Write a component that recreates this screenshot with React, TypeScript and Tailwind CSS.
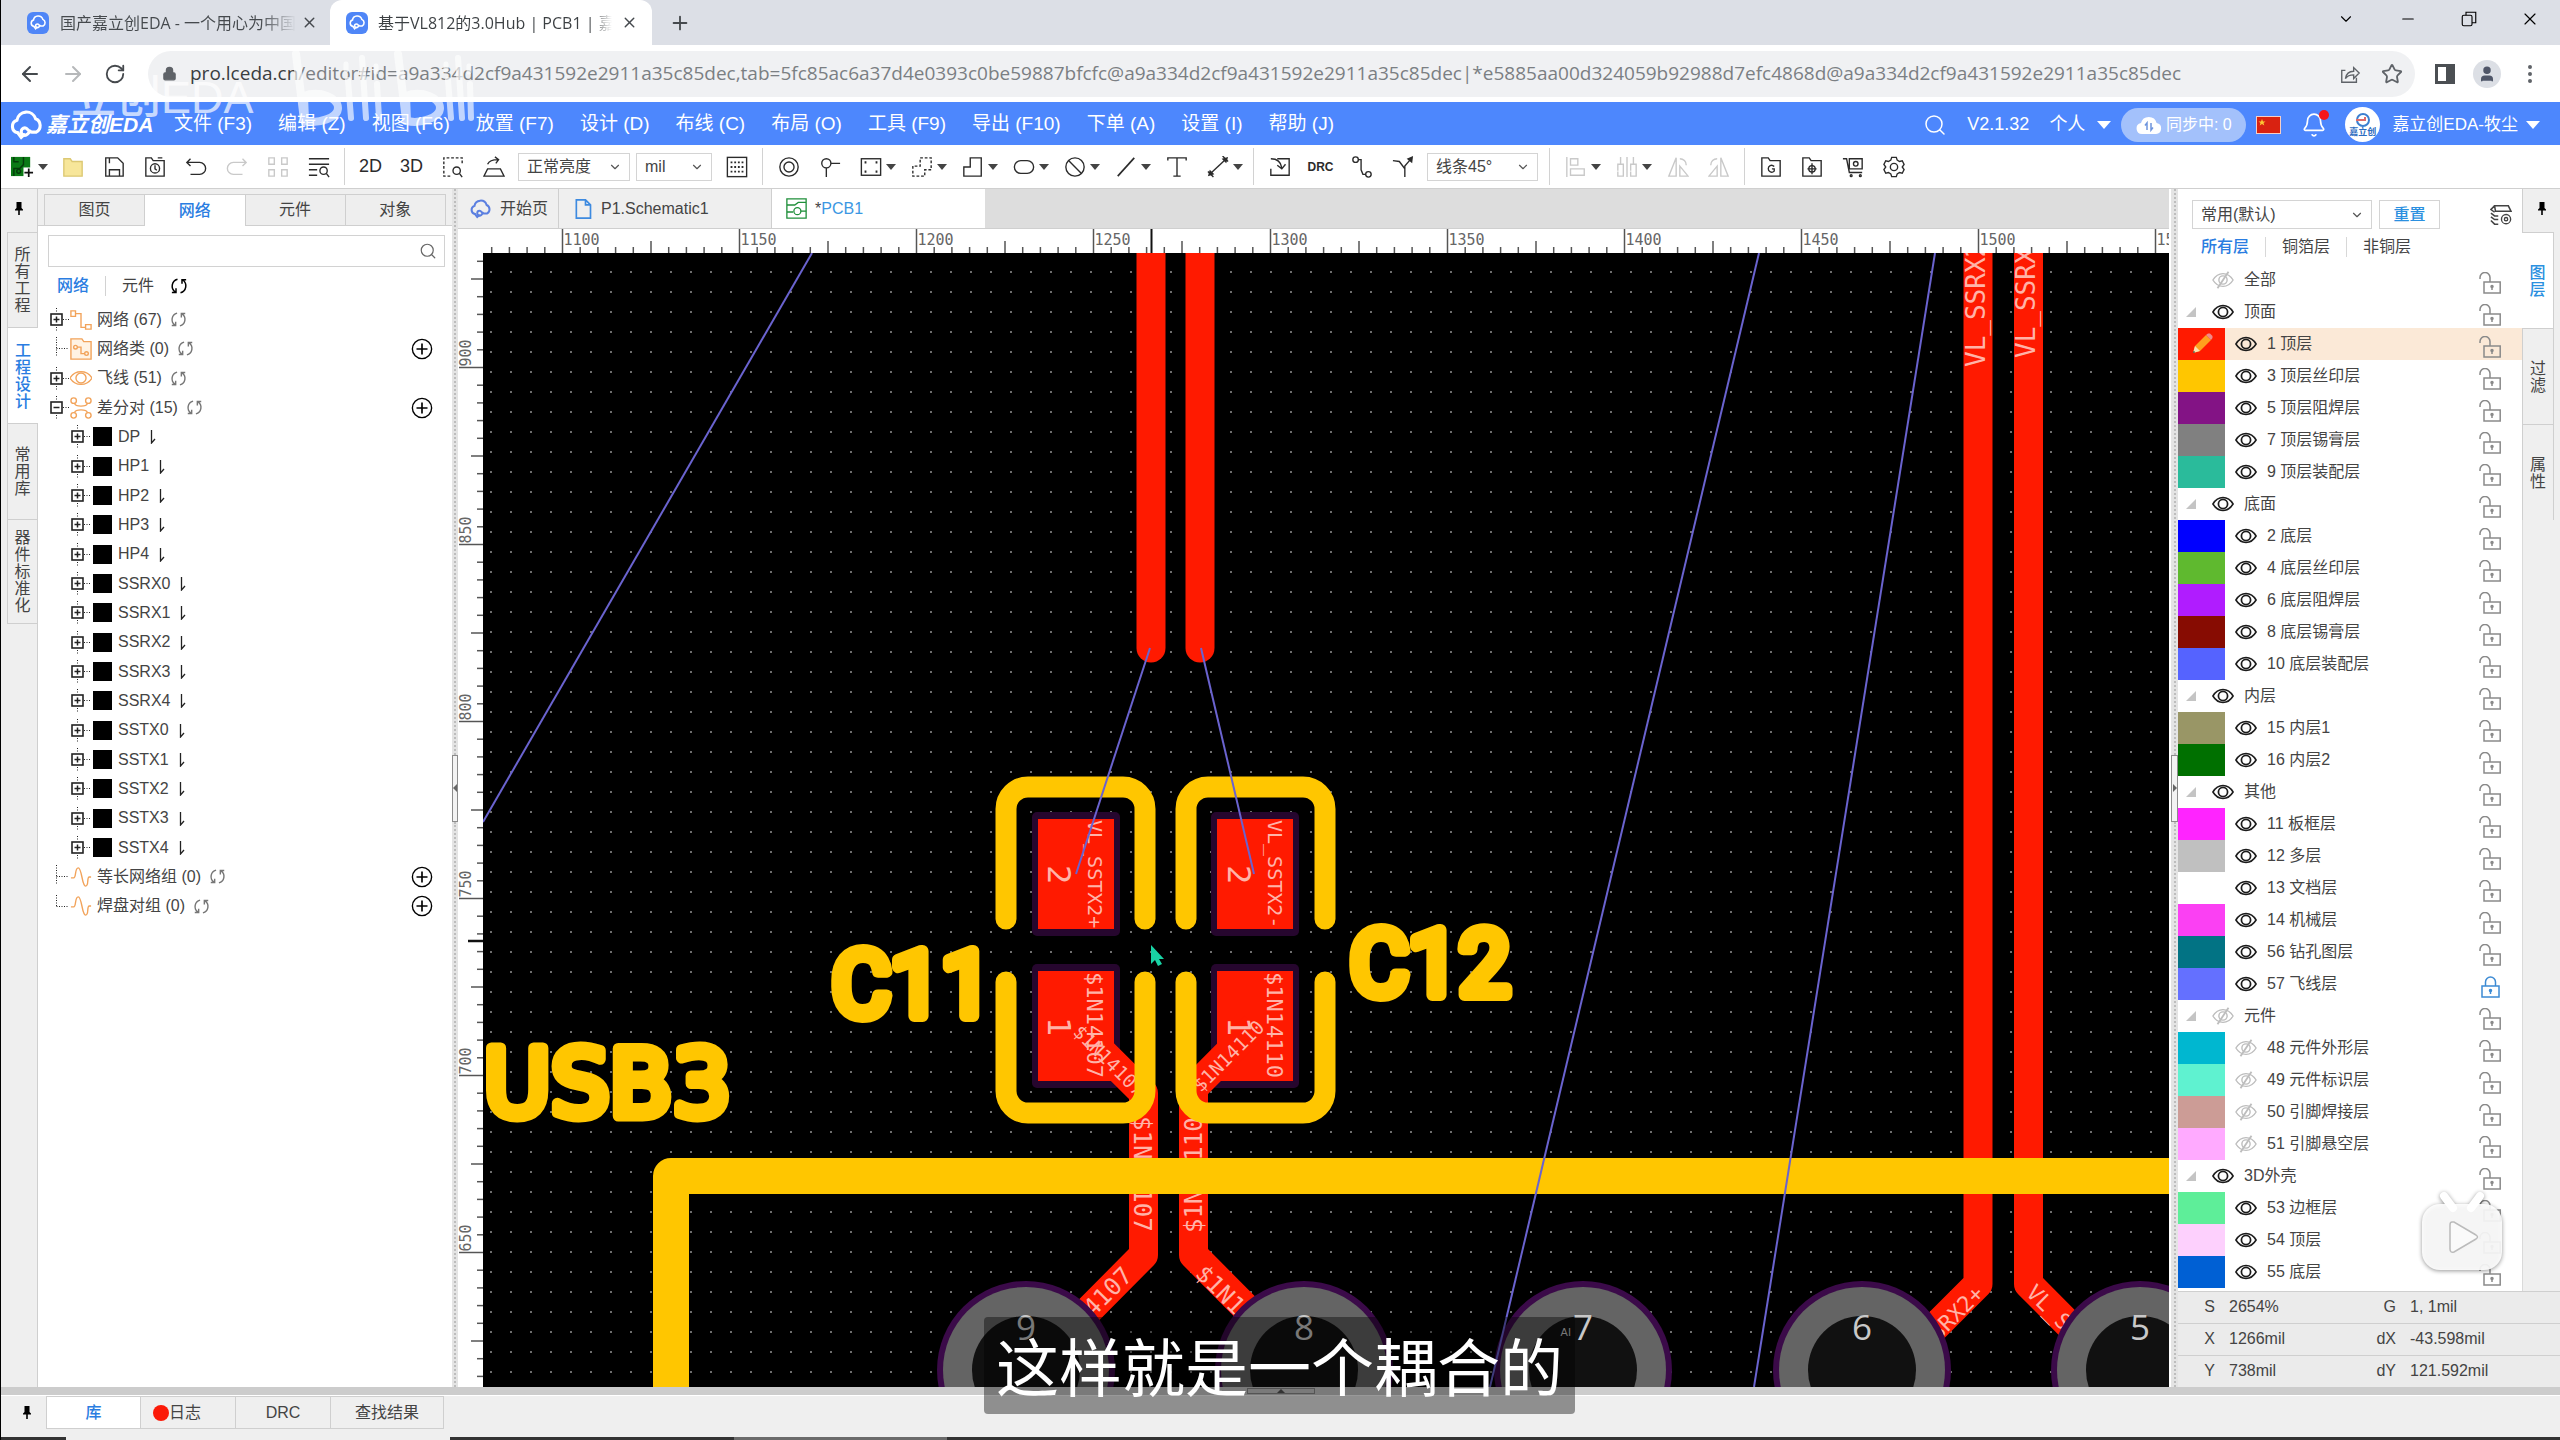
import type { ReactNode } from "react";
import {
  ArrowLeft,
  ArrowRight,
  Bell,
  ChevronDown,
  EllipsisVertical,
  Lock,
  Minus,
  Plus,
  RotateCw,
  Search,
  Star,
  User,
  X,
} from "lucide-react";

type IconProps = { children: ReactNode; className?: string };

function Ico({ children, className = "size-[22px]" }: IconProps) {
  return (
    <svg
      viewBox="0 0 24 24"
      fill="none"
      stroke="currentColor"
      strokeWidth={1.5}
      className={`shrink-0 ${className}`}
    >
      {children}
    </svg>
  );
}

// ---------- shared icons ----------

function CloudLogo({ className }: { className?: string }) {
  return (
    <Ico className={className}>
      <g strokeWidth={2.2} strokeLinecap="round">
        <path d="M5.5 17.5a4.6 4.6 0 0 1-.6-8.9 6.8 6.8 0 0 1 13.2-1A5.2 5.2 0 0 1 18.5 17h-3.2c-2.4 0-2.6-3-4.8-3-1.6 0-2.6 1.2-2.6 2.7 0 2.3 2.7 3.4 4.4 1.8l2-2.2" />
        <path d="M5.5 17.5l2.4 3.3 2-2" />
      </g>
    </Ico>
  );
}

function AppBadge() {
  return (
    <span className="flex size-[22px] shrink-0 items-center justify-center rounded-md bg-[#4f86f7] text-white">
      <CloudLogo className="size-[17px]" />
    </span>
  );
}

function Pin() {
  return (
    <svg viewBox="0 0 10 14" className="h-[14px] w-[10px] fill-black">
      <path d="M2.5 0h5v6l1.5 1.5v1h-3.2v4.5h-1.6V8.500H1v-1L2.500 6z" />
    </svg>
  );
}

function Refresh({ className }: { className?: string }) {
  return (
    <Ico className={className}>
      <g strokeWidth={2}>
        <path d="M10 3A9.500 9.500 0 0 0 7 20M2.500 20.500H8V15" />
        <path d="M14 21a9.500 9.500 0 0 0 3-17M21.500 3.500H16V9" />
      </g>
    </Ico>
  );
}

function Eye() {
  return (
    <Ico>
      <path d="M1 12c3-5 7-7 11-7s8 2 11 7c-3 5-7 7-11 7s-8-2-11-7z" strokeWidth={1.7} />
      <circle cx="12" cy="12" r="5" strokeWidth={1.9} />
    </Ico>
  );
}

function EyeOff() {
  return (
    <Ico className="size-[22px] text-[#bdbdbd]">
      <path d="M1 12c3-5 7-7 11-7s8 2 11 7c-3 5-7 7-11 7s-8-2-11-7z" />
      <circle cx="12" cy="12" r="4.500" />
      <path d="M18 3L6 21" strokeWidth={2} />
    </Ico>
  );
}

function Unlocked() {
  return (
    <svg viewBox="0 0 22 22" fill="none" stroke="#8a8a8a" strokeWidth={1.5} className="size-[22px]">
      <path d="M1 7V5.500a5 5 0 0 1 10 0V10" />
      <rect x="5" y="10" width="16.200" height="11" />
      <circle cx="13" cy="14.500" r="1" fill="#8a8a8a" />
      <path d="M13 15v3" />
    </svg>
  );
}

function Locked() {
  return (
    <svg viewBox="0 0 22 22" fill="none" stroke="#3d8bd4" strokeWidth={1.5} className="size-[22px]">
      <path d="M6.500 10V6a5 5 0 0 1 10 0v4" />
      <rect x="3" y="10" width="17" height="11" />
      <circle cx="11.500" cy="14.500" r="1" fill="#3d8bd4" />
      <path d="M11.500 15v3" />
    </svg>
  );
}

function Caret() {
  return (
    <svg viewBox="0 0 10 6" className="h-1.5 w-2.5 fill-[#444]">
      <path d="M0 0h10L5 6z" />
    </svg>
  );
}

// ---------- browser chrome ----------

function BrowserTabs() {
  return (
    <div className="flex h-[45px] shrink-0 items-end bg-[#dcdfe6] font-['Open_Sans','Noto_Sans_CJK_SC',sans-serif] text-base text-[#45494d]">
      <div className="flex h-full w-[329px] items-center pr-3 pl-[26px]">
        <AppBadge />
        <span className="ml-[11px] w-[236px] overflow-hidden bg-linear-to-r from-[#45494d] from-85% to-transparent bg-clip-text whitespace-nowrap text-transparent">
          国产嘉立创EDA - 一个用心为中国
        </span>
        <button aria-label="关闭标签" className="ml-[5px]">
          <X className="size-[17px]" />
        </button>
      </div>
      <div className="flex h-full w-[322px] items-center rounded-t-xl bg-white pr-3 pl-4">
        <AppBadge />
        <span className="ml-2.5 w-[234px] overflow-hidden bg-linear-to-r from-[#3c4043] from-90% to-transparent bg-clip-text whitespace-nowrap text-transparent">
          基于VL812的3.0Hub | PCB1 | 嘉
        </span>
        <button aria-label="关闭标签" className="ml-[9px]">
          <X className="size-[17px]" />
        </button>
      </div>
      <button aria-label="新标签页" className="ml-[17px] self-center">
        <Plus className="size-[22px]" />
      </button>
      <div className="ml-auto flex items-center self-center pb-2 text-black">
        <button aria-label="搜索标签" className="flex w-[62px] justify-center">
          <ChevronDown className="size-[18px]" strokeWidth={1.5} />
        </button>
        <button aria-label="最小化" className="flex w-[61px] justify-center">
          <Minus className="size-[18px]" strokeWidth={1.5} />
        </button>
        <button aria-label="还原" className="flex w-[61px] justify-center">
          <Ico className="size-[18px]">
            <rect x="3" y="7" width="13" height="14" rx="2" />
            <path d="M8 7V3h13v14h-5" />
          </Ico>
        </button>
        <button aria-label="关闭" className="flex w-[61px] justify-center">
          <X className="size-5" strokeWidth={1.4} />
        </button>
      </div>
    </div>
  );
}

function AddressBar() {
  return (
    <div className="flex h-[57px] shrink-0 items-center bg-white pr-[18px] pl-[17px] text-[#5f6368]">
      <button aria-label="后退" className="w-[43px]">
        <ArrowLeft className="size-6 text-[#45494d]" />
      </button>
      <button aria-label="前进" className="w-[43px]">
        <ArrowRight className="size-6 text-[#b6b8ba]" />
      </button>
      <button aria-label="重新加载" className="w-[44px]">
        <RotateCw className="size-[22px] text-[#45494d]" />
      </button>
      <div className="flex h-[46px] min-w-0 flex-1 items-center rounded-full bg-[#f0f1f3] pr-3 pl-[14px]">
        <Lock className="size-[15px] shrink-0 fill-[#5f6368]" />
        <div
          role="textbox"
          aria-label="地址栏"
          className="ml-[13px] min-w-0 flex-1 overflow-hidden font-['Open_Sans',sans-serif] text-[19px] whitespace-nowrap text-[#7b7f83]"
        >
          <span className="text-[#3a3d40]">pro.lceda.cn</span>
          /editor#id=a9a334d2cf9a431592e2911a35c85dec,tab=5fc85ac6a37d4e0393c0be59887bfcfc@a9a334d2cf9a431592e2911a35c85dec|*e5885aa00d324059b92988d7efc4868d@a9a334d2cf9a431592e2911a35c85dec
        </div>
        <button aria-label="分享" className="mr-5">
          <Ico>
            <path d="M7 8H3v13h16v-5M7 17c1-6 5-8 9-8V5l6 6-6 6v-4c-4 0-7 1-9 4z" />
          </Ico>
        </button>
        <button aria-label="收藏">
          <Star className="size-[22px]" />
        </button>
      </div>
      <button aria-label="侧边栏" className="ml-5">
        <svg viewBox="0 0 20 20" className="size-5">
          <path d="M0 0h20v20H0zM3 3v14h8V3z" fillRule="evenodd" fill="#4b4f53" />
        </svg>
      </button>
      <button
        aria-label="用户"
        className="ml-[18px] flex size-7 items-center justify-center rounded-full bg-[#dcdfe5]"
      >
        <User className="size-[18px] fill-[#4f5668] text-[#4f5668]" />
      </button>
      <button aria-label="更多" className="ml-[17px]">
        <EllipsisVertical className="size-6" />
      </button>
    </div>
  );
}

// ---------- app header ----------

const menus = [
  "文件 (F3)",
  "编辑 (Z)",
  "视图 (F6)",
  "放置 (F7)",
  "设计 (D)",
  "布线 (C)",
  "布局 (O)",
  "工具 (F9)",
  "导出 (F10)",
  "下单 (A)",
  "设置 (I)",
  "帮助 (J)",
];

function MenuBar() {
  return (
    <header className="flex h-[43px] shrink-0 items-center bg-[#4d87fd] pt-0.5 pl-[9px] text-white">
      <CloudLogo className="size-[34px]" />
      <span className="ml-0.5 w-[115px] text-[21px] font-bold whitespace-nowrap italic">嘉立创EDA</span>
      <nav className="flex">
        {menus.map((m) => (
          <button key={m} className="px-[13px] text-[19px] whitespace-nowrap">
            {m}
          </button>
        ))}
      </nav>
      <div className="ml-auto flex items-center pr-5 text-[18px] whitespace-nowrap">
        <button aria-label="搜索">
          <Search className="size-6" strokeWidth={1.5} />
        </button>
        <span className="ml-5">V2.1.32</span>
        <button className="ml-5 flex items-center gap-3">
          个人
          <svg viewBox="0 0 14 8" className="h-2 w-3.5 fill-white">
            <path d="M0 0h14L7 8z" />
          </svg>
        </button>
        <span className="ml-2.5 flex h-[34px] w-[125px] items-center justify-center gap-1 rounded-full bg-[#a3c1fb] text-base">
          <svg viewBox="0 0 26 20" className="h-5 w-[26px]">
            <path
              d="M6 19a5.500 5.500 0 0 1-1-10.900 8 8 0 0 1 15.600 0A5.500 5.500 0 0 1 20 19z"
              fill="white"
            />
            <path d="M11 15V8l-2 2.500M15 8v7l2-2.500" fill="none" stroke="#6d94dd" strokeWidth="1.500" />
          </svg>
          同步中: 0
        </span>
        <svg viewBox="0 0 25 18" className="ml-2.5 h-[18px] w-[25px]">
          <rect x="0.500" y="0.500" width="24" height="17" fill="#d92211" stroke="#f6cfc6" />
          <path d="M6 3l1 2.500h2.500l-2 1.500.8 2.500L6 8 3.700 9.500l.8-2.500-2-1.500H5z" fill="#fcc735" />
        </svg>
        <button aria-label="通知" className="relative ml-5">
          <Bell className="size-[26px]" strokeWidth={1.5} />
          <span className="absolute -top-0.5 -right-0.5 size-2.5 rounded-full bg-[#f5161b]" />
        </button>
        <span className="ml-[18px] flex size-[35px] flex-col items-center justify-center rounded-full bg-white text-[9px] leading-[9px] font-bold text-[#2d6cc0]">
          <svg viewBox="0 0 20 16" className="h-4 w-5" fill="none" strokeWidth="2">
            <circle cx="10" cy="8" r="6" stroke="#3c7fd0" />
            <path d="M3 8h9V5" stroke="#e06a6a" />
          </svg>
          嘉立创
        </span>
        <button className="ml-3 flex items-center gap-2 text-[17px]">
          嘉立创EDA-牧尘
          <svg viewBox="0 0 14 8" className="h-2 w-3.5 fill-white">
            <path d="M0 0h14L7 8z" />
          </svg>
        </button>
      </div>
    </header>
  );
}

// ---------- toolbar ----------

type ToolProps = { label: string; caret?: boolean; dim?: boolean; children: ReactNode };

function Tool({ label, caret, dim, children }: ToolProps) {
  return (
    <button
      aria-label={label}
      className={`flex h-full shrink-0 items-center ${
        caret ? "w-[51px] gap-1 pl-2.5" : "w-[41px] justify-center"
      } ${dim ? "text-[#c9c9c9]" : "text-[#2b2b2b]"}`}
    >
      {children}
      {caret && <Caret />}
    </button>
  );
}

function Sep() {
  return <span className="mx-[5px] h-[37px] w-px shrink-0 bg-[#d2d2d2]" />;
}

type PickProps = { label: string; value: string; className: string };

function Pick({ label, value, className }: PickProps) {
  return (
    <span className={`relative flex shrink-0 items-center ${className}`}>
      <select
        aria-label={label}
        defaultValue={value}
        className="size-full appearance-none border border-[#d4d4d4] bg-white pl-2 text-base text-[#444]"
      >
        <option>{value}</option>
      </select>
      <ChevronDown className="pointer-events-none absolute right-2 size-3.5 text-[#555]" />
    </span>
  );
}

function Toolbar() {
  return (
    <div className="flex h-[44px] shrink-0 items-center border-b border-[#cfcfcf] bg-white">
      <Tool label="新建" caret>
        <svg viewBox="0 0 24 24" className="size-[23px]">
          <path d="M0 2h20v20H0z" fill="#0b7a16" />
          <path d="M3 22v-8h6l4-4V2M3 2v5h5" fill="none" stroke="#053b0a" strokeWidth="1.500" />
          <circle cx="8" cy="17" r="2" fill="none" stroke="#053b0a" strokeWidth="1.500" />
          <path d="M13 13h11v11H13z" fill="white" />
          <path d="M18.500 14v9M14 18.500h9" stroke="#111" strokeWidth="1.800" />
        </svg>
      </Tool>
      <Tool label="打开">
        <Ico>
          <path d="M2 3h7l2 3h11v16H2z" fill="#f7e69a" stroke="#dcc873" />
        </Ico>
      </Tool>
      <Tool label="保存">
        <Ico>
          <path d="M3 2h13l6 6v14H3zM7 2v6M7 22v-7h11v7" />
        </Ico>
      </Tool>
      <Tool label="历史">
        <Ico>
          <path d="M2 2h6l2 3h12v17H2z" />
          <circle cx="12" cy="13.500" r="5" />
          <path d="M12 10v4l2 1.500M15 2h5" />
        </Ico>
      </Tool>
      <Tool label="撤销">
        <Ico>
          <path d="M6 3L2 7l4 4M2 7h14a6 6 0 0 1 0 13H6" />
        </Ico>
      </Tool>
      <Tool label="重做" dim>
        <Ico>
          <path d="M18 3l4 4-4 4M22 7H8a6 6 0 0 0 0 13h10" />
        </Ico>
      </Tool>
      <Tool label="阵列" dim>
        <Ico>
          <path d="M2 2h6v7H2zM16 2h6v7h-6zM2 15h6v7H2zM16 15h6v7h-6z" />
        </Ico>
      </Tool>
      <Tool label="查找">
        <Ico>
          <path d="M1 3h22M1 9h22M1 15h9M1 21h9" />
          <circle cx="17" cy="16" r="4" />
          <path d="M20 19l3 4" />
        </Ico>
      </Tool>
      <Sep />
      <Tool label="2D视图">
        <span className="text-[18px]">2D</span>
      </Tool>
      <Tool label="3D视图">
        <span className="text-[18px]">3D</span>
      </Tool>
      <Tool label="框选查找">
        <Ico>
          <path d="M9 22H2V2h20v8" strokeDasharray="3 2" />
          <circle cx="16" cy="16" r="4" />
          <path d="M19 19l3 4" />
        </Ico>
      </Tool>
      <Tool label="旋转">
        <Ico>
          <path d="M5 14h14l4 8H1zM5 9c2-4 6-5 11-5M13 1l4 3-3 4" />
        </Ico>
      </Tool>
      <span className="w-1 shrink-0" />
      <Pick label="亮度" value="正常亮度" className="h-7 w-[112px]" />
      <Pick label="单位" value="mil" className="ml-1.5 h-7 w-[76px]" />
      <span className="w-1 shrink-0" />
      <Tool label="网格">
        <Ico>
          <rect x="1.500" y="1.500" width="21" height="21" />
          <path d="M5 7h14M5 12h14M5 17h14" strokeDasharray="2 2" strokeWidth={2} />
        </Ico>
      </Tool>
      <Sep />
      <Tool label="焊盘">
        <Ico>
          <circle cx="12" cy="12" r="10" />
          <circle cx="12" cy="12" r="5.500" />
        </Ico>
      </Tool>
      <Tool label="过孔">
        <Ico>
          <circle cx="8" cy="8" r="5" />
          <path d="M8 13v10M13 8h10" />
        </Ico>
      </Tool>
      <Tool label="矩形" caret>
        <Ico>
          <rect x="1.500" y="3" width="21" height="18" />
          <path d="M5 7h2M17 7h2M5 17h2M17 17h2" strokeWidth={2.5} />
        </Ico>
      </Tool>
      <Tool label="区域" caret>
        <Ico>
          <path d="M10 2h12v13h-7v7H2V11h8z" strokeDasharray="3 2" />
        </Ico>
      </Tool>
      <Tool label="填充" caret>
        <Ico>
          <path d="M9 2h12v20H2V12h7z" />
        </Ico>
      </Tool>
      <Tool label="挖槽" caret>
        <Ico>
          <rect x="1.500" y="5" width="21" height="14" rx="7" />
        </Ico>
      </Tool>
      <Tool label="禁止区域" caret>
        <Ico>
          <circle cx="12" cy="12" r="10" />
          <path d="M5 5l14 14" />
        </Ico>
      </Tool>
      <Tool label="线条" caret>
        <Ico>
          <path d="M3 22L21 2" strokeWidth={1.8} />
        </Ico>
      </Tool>
      <Tool label="文本">
        <Ico>
          <path d="M2 5V2h20v3M12 2v20M8 22h8" />
        </Ico>
      </Tool>
      <Tool label="尺寸" caret>
        <Ico>
          <path d="M3 20L21 3" />
          <path d="M1 22l2-7 5 5zM23 1l-2 7-5-5z" fill="currentColor" stroke="none" />
          <path d="M1 17l6 6M17 0l6 6" />
        </Ico>
      </Tool>
      <Sep />
      <Tool label="导入变更">
        <Ico>
          <path d="M9 3h13v18H2V14M2 3c6 0 11 3 12 10M9 10l5 4 4-5" />
        </Ico>
      </Tool>
      <Tool label="设计规则检查">
        <span className="text-xs font-bold">DRC</span>
      </Tool>
      <Tool label="单路布线">
        <Ico>
          <circle cx="5" cy="4" r="3" />
          <circle cx="19" cy="20" r="3" />
          <path d="M8 4h3v11l2 5h3" />
        </Ico>
      </Tool>
      <Tool label="差分布线">
        <Ico>
          <path d="M1 5l7 1 6 8v9M14 14v-3l6-7" />
          <path d="M23 0l-1 8-6-5z" fill="currentColor" stroke="none" />
        </Ico>
      </Tool>
      <span className="w-1 shrink-0" />
      <Pick label="拐角" value="线条45°" className="h-7 w-[111px]" />
      <span className="w-1.5 shrink-0" />
      <Sep />
      <Tool label="对齐" caret dim>
        <Ico>
          <path d="M2 1v22M6 3h8v7H6zM6 14h15v7H6z" />
        </Ico>
      </Tool>
      <Tool label="分布" caret dim>
        <Ico>
          <path d="M2 9h6v13H2zM16 9h6v13h-6zM5 1v8M19 1v8M12 1v22" strokeDasharray="30 1" />
        </Ico>
      </Tool>
      <Tool label="左旋" dim>
        <Ico>
          <path d="M10 2v20H2zM14 22h9L14 11zM14 3c4 0 7 3 7 7" />
        </Ico>
      </Tool>
      <Tool label="右旋" dim>
        <Ico>
          <path d="M14 2v20h8zM10 22H1l9-11zM10 3c-4 0-7 3-7 7" />
        </Ico>
      </Tool>
      <Sep />
      <Tool label="导出Gerber">
        <Ico>
          <path d="M2 2h7l2 3h11v17H2z" />
          <path d="M15.500 11.500c-3-3-6.500-.8-6.500 2.500s4 5 6.500 2.500V14H13" />
        </Ico>
      </Tool>
      <Tool label="坐标文件">
        <Ico>
          <path d="M2 2h7l2 3h11v17H2z" />
          <path d="M12 8v12M7 14h10" />
          <circle cx="12" cy="14" r="3.500" />
        </Ico>
      </Tool>
      <Tool label="下单">
        <Ico>
          <path d="M1 3h4l3 15h14M8 3h14v11H8z" />
          <circle cx="15" cy="8.500" r="2.500" />
          <circle cx="10" cy="21.500" r="1" />
          <circle cx="20" cy="21.500" r="1" />
        </Ico>
      </Tool>
      <Tool label="设置">
        <Ico>
          <circle cx="12" cy="12" r="4" />
          <path d="M9.500 1.500h5l1 3 2.500 1.500 3-.8 2 4-2 2.800 2 2.800-2 4-3-.8-2.500 1.500-1 3h-5l-1-3L6 18l-3 .8-2-4L3 12 1 9.200l2-4L6 6l2.500-1.500z" />
        </Ico>
      </Tool>
    </div>
  );
}

// ---------- left side ----------

const leftRail = [
  { name: "所有工程", height: "h-[95px]" },
  { name: "工程设计", height: "h-[96px]", active: true },
  { name: "常用库", height: "h-[96px]" },
  { name: "器件标准化", height: "h-[104px]" },
];

function LeftRail() {
  return (
    <aside className="flex w-[37px] shrink-0 flex-col items-end bg-[#efefef]">
      <div className="flex h-[43px] w-full items-center justify-center border-r border-[#cfcfcf] pb-1">
        <Pin />
      </div>
      {leftRail.map((t) => (
        <button
          key={t.name}
          className={`flex w-[31px] shrink-0 items-center justify-center border-t border-l border-[#cfcfcf] text-base leading-[17px] ${t.height} ${
            t.active ? "bg-white font-medium text-[#2a7de1]" : "border-r text-[#444]"
          }`}
        >
          <span className="w-4 break-all">{t.name}</span>
        </button>
      ))}
      <div className="w-full flex-1 border-r border-[#cfcfcf]">
        <div className="ml-1.5 h-px bg-[#cfcfcf]" />
      </div>
    </aside>
  );
}

function Branch({ state }: { state: "plus" | "minus" | "leaf" | "end" }) {
  return (
    <svg viewBox="0 0 20 29" className="h-[29px] w-5 shrink-0" fill="none" stroke="#222">
      {state === "leaf" && <path d="M6.500 3v20M6.500 14.500H19" strokeDasharray="1 1.500" />}
      {state === "end" && <path d="M6.500 3v11.500M6.500 14.500H19" strokeDasharray="1 1.500" />}
      {(state === "plus" || state === "minus") && (
        <>
          <path d="M6.500 3v5M6.500 22v4M13 14.500h6" strokeDasharray="1 1.500" />
          <rect x="1" y="9" width="11" height="11" strokeWidth="1.600" />
          <path d={state === "plus" ? "M3.500 14.500h6M6.500 11.500v6" : "M3.500 14.500h6"} strokeWidth="1.500" />
        </>
      )}
    </svg>
  );
}

const orange = "size-[22px] text-[#f2a35a]";

function NetIcon() {
  return (
    <Ico className={orange}>
      <path d="M1 2h5v6H1zM17 17h6v5h-6zM6 5h6v15h5" />
    </Ico>
  );
}

function ClassIcon() {
  return (
    <Ico className={orange}>
      <path d="M1 1h12l2 3h8v19H1z" fill="#fff3e4" />
      <circle cx="6" cy="10" r="2" />
      <circle cx="18" cy="17" r="2" />
      <path d="M8 10h4v7h4" />
    </Ico>
  );
}

function RatIcon() {
  return (
    <Ico className={orange}>
      <path d="M0 12c3-5 7-7 12-7s9 2 12 7c-3 5-7 7-12 7S3 17 0 12z" />
      <circle cx="12" cy="12" r="5.500" />
    </Ico>
  );
}

function PairIcon() {
  return (
    <Ico className={orange}>
      <circle cx="4" cy="4" r="3" />
      <circle cx="20" cy="4" r="3" />
      <circle cx="4" cy="20" r="3" />
      <circle cx="20" cy="20" r="3" />
      <path d="M5 7c1 4 13 4 14 0M5 17c1-4 13-4 14 0" />
    </Ico>
  );
}

function WaveIcon() {
  return (
    <Ico className={orange}>
      <path d="M1 13h3C7 13 5 2 9 2s4 20 8 20 1-10 4-10h2" />
    </Ico>
  );
}

const pairs = [
  "DP", "HP1", "HP2", "HP3", "HP4",
  "SSRX0", "SSRX1", "SSRX2", "SSRX3", "SSRX4",
  "SSTX0", "SSTX1", "SSTX2", "SSTX3", "SSTX4",
];

type GroupProps = {
  state: "plus" | "minus" | "leaf" | "end";
  icon: ReactNode;
  name: string;
  add?: boolean;
};

function Group({ state, icon, name, add }: GroupProps) {
  return (
    <li className="flex items-center pr-[19px] pl-3">
      <Branch state={state} />
      {icon}
      <span className="ml-[5px]">{name}</span>
      <Refresh className="ml-2 size-[17px] text-[#777]" />
      {add && (
        <button aria-label={`添加${name}`} className="ml-auto">
          <Ico className="size-[22px] text-black">
            <circle cx="12" cy="12" r="10.500" />
            <path d="M6 12h12M12 6v12" strokeWidth={1.8} />
          </Ico>
        </button>
      )}
    </li>
  );
}

function LeftPanel() {
  return (
    <section className="flex w-[414px] shrink-0 flex-col bg-white text-base text-[#444]">
      <div className="flex h-[37px] items-end border-b border-[#cfcfcf] bg-[#efefef] pr-1.5 pl-1.5">
        {["图页", "网络", "元件", "对象"].map((t) => (
          <button
            key={t}
            className={`h-[31px] flex-1 border-t border-l border-[#cfcfcf] last:border-r ${
              t === "网络" ? "-mb-px h-[32px] bg-white font-medium text-[#2a7de1]" : "bg-[#eeeeee]"
            }`}
          >
            {t}
          </button>
        ))}
      </div>
      <label className="mx-2.5 mt-[9px] mr-[7px] flex h-8 items-center border border-[#d2d2d2] pr-[7px]">
        <input aria-label="搜索网络" className="h-full min-w-0 flex-1 px-2 outline-none" />
        <Search className="size-[18px] text-[#666]" strokeWidth={1.6} />
      </label>
      <div className="flex h-[38px] items-center pl-[19px]">
        <button className="font-medium text-[#2a7de1]">网络</button>
        <span className="mx-4 h-5 w-px bg-[#d2d2d2]" />
        <button>元件</button>
        <button aria-label="刷新" className="ml-4">
          <Refresh className="size-[18px] text-black" />
        </button>
      </div>
      <ul className="grid h-[616px] auto-rows-fr">
        <Group state="plus" icon={<NetIcon />} name="网络 (67)" />
        <Group state="leaf" icon={<ClassIcon />} name="网络类 (0)" add />
        <Group state="plus" icon={<RatIcon />} name="飞线 (51)" />
        <Group state="minus" icon={<PairIcon />} name="差分对 (15)" add />
        {pairs.map((p) => (
          <li key={p} className="flex items-center pl-[33px]">
            <Branch state="plus" />
            <span className="ml-0.5 size-[19px] bg-black" />
            <span className="ml-1.5">{p}</span>
            <svg viewBox="0 0 6 15" className="ml-2.5 h-[15px] w-1.5" fill="none" stroke="#222">
              <path d="M1.500 1v13l3.500-4" strokeWidth="1.300" />
            </svg>
          </li>
        ))}
        <Group state="leaf" icon={<WaveIcon />} name="等长网络组 (0)" add />
        <Group state="end" icon={<WaveIcon />} name="焊盘对组 (0)" add />
      </ul>
    </section>
  );
}

function Splitter({ side }: { side: "left" | "right" }) {
  return (
    <div
      className={`flex shrink-0 flex-col items-center bg-[#e4e4e4] ${side === "left" ? "w-1.5" : "w-[7px]"}`}
    >
      <div className="flex-1 border-l-2 border-dotted border-[#bdbdbd]" />
      <div className="flex h-[67px] w-full items-center justify-center border border-[#8c8c8c] bg-[#f3f3f3]">
        <svg viewBox="0 0 4 8" className="h-2 w-1 fill-[#666]">
          <path d={side === "left" ? "M4 0v8L0 4z" : "M0 0v8l4-4z"} />
        </svg>
      </div>
      <div className="flex-1 border-l-2 border-dotted border-[#bdbdbd]" />
    </div>
  );
}

// ---------- editor ----------

const ticks = Array.from({ length: 110 }, (_, i) => i - 10);

function tickLength(k: number) {
  if (k % 10 === 0) return 24;
  return k % 5 === 0 ? 12 : 6;
}

// The rulers and the board share one drawing space; each svg shifts it to its own origin.
function TopRuler() {
  return (
    <svg className="ml-[25px] block h-6 flex-1 bg-white" aria-hidden="true">
      <g transform="translate(-483 0)" stroke="#555" strokeWidth="1.500">
        {ticks.map((k) => {
          const x = 562.5 + k * 17.7;
          return (
            <g key={k}>
              <path d={`M${x} 24v-${tickLength(k)}`} />
              {k % 10 === 0 && (
                <text x={x + 1} y="16" stroke="none" fill="#666" className="font-['DejaVu_Sans_Mono',monospace] text-[15px]">
                  {1100 + k * 5}
                </text>
              )}
            </g>
          );
        })}
        <path d="M1151.500 0v24" stroke="#111" strokeWidth="2" />
      </g>
    </svg>
  );
}

function SideRuler() {
  return (
    <svg className="block w-[25px] shrink-0 bg-white" aria-hidden="true">
      <g transform="translate(0 -253)" stroke="#555" strokeWidth="1.500">
        {ticks.map((k) => {
          const y = 367.5 + k * 17.7;
          return (
            <g key={k}>
              <path d={`M25 ${y}h-${tickLength(k)}`} />
              {k % 10 === 0 && (
                <text
                  transform={`translate(13 ${y - 1}) rotate(-90)`}
                  stroke="none"
                  fill="#666"
                  className="font-['DejaVu_Sans_Mono',monospace] text-[15px]"
                >
                  {900 - k * 5}
                </text>
              )}
            </g>
          );
        })}
        <path d="M10 941h15" stroke="#111" strokeWidth="2.500" />
      </g>
    </svg>
  );
}

type NetTextProps = { x: number; y: number; angle: number; size: number; end?: boolean; children: string };

function NetText({ x, y, angle, size, end, children }: NetTextProps) {
  return (
    <text
      transform={`translate(${x} ${y}) rotate(${angle})`}
      fontSize={size}
      fill="#ffb3a8"
      textAnchor={end ? "end" : "start"}
    >
      {children}
    </text>
  );
}

const smdPads = [
  { x: 1038, y: 819 },
  { x: 1038, y: 971 },
  { x: 1217, y: 819 },
  { x: 1217, y: 971 },
];

const holes = [
  { n: "9", x: 1026 },
  { n: "8", x: 1304 },
  { n: "7", x: 1583 },
  { n: "6", x: 1862 },
  { n: "5", x: 2140 },
];

function Board() {
  return (
    <svg className="block min-w-0 flex-1 bg-black font-['DejaVu_Sans_Mono',monospace]">
      <defs>
        <pattern id="dots" width="20" height="20" patternUnits="userSpaceOnUse" x="0" y="2">
          <rect x="10" y="9" width="2" height="2" fill="#6e6e6e" />
        </pattern>
      </defs>
      <g transform="translate(-483 -253)">
        <rect x="480" y="240" width="3000" height="2000" fill="url(#dots)" />

        {smdPads.map((p) => (
          <g key={`${p.x}-${p.y}`}>
            <rect x={p.x - 6} y={p.y - 7} width="88" height="124" rx="5" fill="#26062e" />
            <rect x={p.x} y={p.y} width="76" height="110" fill="#ff1a00" />
          </g>
        ))}

        <g fill="none" stroke="#ff1a00" strokeWidth="29" strokeLinejoin="round" strokeLinecap="round">
          <path d="M1151 200V648" />
          <path d="M1200 200V648" />
          <path d="M1076 1026L1143.500 1093V1255L1080 1319" strokeLinecap="butt" />
          <path d="M1255 1026L1193.500 1088V1255L1262 1324" strokeLinecap="butt" />
          <path d="M1978 200V1284L1910 1352" />
          <path d="M2028.500 200V1284L2096 1352" />
        </g>

        <NetText x={1048} y={865} angle={90} size={32}>2</NetText>
        <NetText x={1228} y={865} angle={90} size={32}>2</NetText>
        <NetText x={1048} y={1017} angle={90} size={32}>1</NetText>
        <NetText x={1228} y={1017} angle={90} size={32}>1</NetText>
        <NetText x={1088} y={820} angle={90} size={20}>VL_SSTX2+</NetText>
        <NetText x={1268} y={820} angle={90} size={20}>VL_SSTX2-</NetText>
        <NetText x={1087} y={972} angle={90} size={22}>$1N14107</NetText>
        <NetText x={1267} y={972} angle={90} size={22}>$1N14110</NetText>
        <NetText x={1072} y={1033} angle={45} size={19}>$1N14107</NetText>
        <NetText x={1201} y={1093} angle={-45} size={19}>$1N14110</NetText>
        <NetText x={1134} y={1116} angle={90} size={24}>$1N14107</NetText>
        <NetText x={1202} y={1233} angle={-90} size={24}>$1N14110</NetText>
        <NetText x={1134} y={1277} angle={-45} size={24} end>$1N14107</NetText>
        <NetText x={1194} y={1275} angle={45} size={24}>$1N14110</NetText>
        <NetText x={1985} y={367} angle={-90} size={26}>VL_SSRX2+</NetText>
        <NetText x={2035} y={358} angle={-90} size={26}>VL_SSRX2-</NetText>
        <NetText x={1985} y={1295} angle={-45} size={22} end>VL_SSRX2+</NetText>
        <NetText x={2025} y={1294} angle={45} size={22}>VL_SSRX2-</NetText>

        {holes.map((h) => (
          <g key={h.n}>
            <circle cx={h.x} cy="1370" r="89" fill="#3b0a49" />
            <circle cx={h.x} cy="1370" r="83" fill="#646464" />
            <circle cx={h.x} cy="1370" r="54" fill="#111111" />
            <text
              x={h.x}
              y="1340"
              fontSize="35"
              fill="#c8c8c8"
              textAnchor="middle"
              className="font-['Open_Sans',sans-serif]"
            >
              {h.n}
            </text>
          </g>
        ))}

        <g fill="none" stroke="#ffc600" strokeWidth="21" strokeLinecap="round">
          <path d="M1006 919V809a22 22 0 0 1 22-22h95a22 22 0 0 1 22 22V919" />
          <path d="M1186 919V809a22 22 0 0 1 22-22h95a22 22 0 0 1 22 22V919" />
          <path d="M1006 982V1091a22 22 0 0 0 22 22h95a22 22 0 0 0 22-22V982" />
          <path d="M1186 982V1091a22 22 0 0 0 22 22h95a22 22 0 0 0 22-22V982" />
          <path d="M671 2000V1176H3600" strokeWidth="36" strokeLinejoin="round" />
        </g>

        <g fill="#ffc600" stroke="#ffc600" strokeLinejoin="round">
          <text x="832" y="1016" strokeWidth="12" className="font-['Roboto',sans-serif] text-[90px]">
            C11
          </text>
          <text x="1350" y="995" strokeWidth="12" className="font-['Roboto',sans-serif] text-[90px]">
            C12
          </text>
          <text
            x="731"
            y="1116"
            textAnchor="end"
            strokeWidth="11"
            className="font-['DejaVu_Sans',sans-serif] text-[92px]"
          >
            USB3
          </text>
        </g>

        <g stroke="#6a63cf" strokeWidth="2">
          <path d="M812 253L483 822" />
          <path d="M1150 648L1076 874" />
          <path d="M1201 648L1254 874" />
          <path d="M1759 253L1490 1387" />
          <path d="M1935 253L1754 1387" />
        </g>

        <path d="M1151 945v19l4-4 3 6 4-2-3-5h5z" fill="#19d3a5" />
      </g>
    </svg>
  );
}

function Editor() {
  return (
    <section className="flex min-w-0 flex-1 flex-col pr-0.5">
      <div className="flex h-10 shrink-0 border-b border-[#cfcfcf] bg-[#dddddd] text-base text-[#444]">
        <button className="flex w-[101px] items-center gap-2 border-r border-[#cfcfcf] bg-[#efefef] pl-3 whitespace-nowrap">
          <CloudLogo className="size-[22px] text-[#5b7fe0]" />
          开始页
        </button>
        <button className="flex w-[213px] items-center gap-2 border-r border-[#cfcfcf] bg-[#efefef] pl-3.5">
          <Ico className="size-5 text-[#3d8ae0]">
            <path d="M4 1h11l6 6v16H4zM15 1v6h6" strokeWidth={2} />
          </Ico>
          P1.Schematic1
        </button>
        <button className="flex w-[213px] items-center gap-2 bg-white pl-3.5 text-[#3b97e3]">
          <Ico className="size-[21px] text-[#1f8f3a]">
            <path d="M1 1h22v22H1zM1 8h9l4-3h9M1 16h7" />
            <circle cx="13" cy="15" r="4" />
            <path d="M17 15h6" />
          </Ico>
          <span>
            <span className="text-[#444]">*</span>PCB1
          </span>
        </button>
      </div>
      <div className="flex bg-white">
        <TopRuler />
      </div>
      <div className="flex min-h-0 flex-1">
        <SideRuler />
        <Board />
      </div>
    </section>
  );
}

// ---------- layers ----------

type Layer = { name: string; color?: string; hidden?: boolean; active?: boolean; locked?: boolean; all?: boolean };

const layers: Layer[] = [
  { name: "全部", hidden: true, all: true },
  { name: "顶面" },
  { name: "1 顶层", color: "bg-[#ff1a00]", active: true },
  { name: "3 顶层丝印层", color: "bg-[#ffc600]" },
  { name: "5 顶层阻焊层", color: "bg-[#831385]" },
  { name: "7 顶层锡膏层", color: "bg-[#808080]" },
  { name: "9 顶层装配层", color: "bg-[#2abb9b]" },
  { name: "底面" },
  { name: "2 底层", color: "bg-[#0000ff]" },
  { name: "4 底层丝印层", color: "bg-[#5fb92f]" },
  { name: "6 底层阻焊层", color: "bg-[#b01cff]" },
  { name: "8 底层锡膏层", color: "bg-[#870c02]" },
  { name: "10 底层装配层", color: "bg-[#5563ff]" },
  { name: "内层" },
  { name: "15 内层1", color: "bg-[#999666]" },
  { name: "16 内层2", color: "bg-[#007000]" },
  { name: "其他" },
  { name: "11 板框层", color: "bg-[#ff24ff]" },
  { name: "12 多层", color: "bg-[#c0c0c0]" },
  { name: "13 文档层", color: "bg-white" },
  { name: "14 机械层", color: "bg-[#fb40f3]" },
  { name: "56 钻孔图层", color: "bg-[#027384]" },
  { name: "57 飞线层", color: "bg-[#6470ff]", locked: true },
  { name: "元件", hidden: true },
  { name: "48 元件外形层", color: "bg-[#00b7d0]", hidden: true },
  { name: "49 元件标识层", color: "bg-[#5ff2d0]", hidden: true },
  { name: "50 引脚焊接层", color: "bg-[#cc9c96]", hidden: true },
  { name: "51 引脚悬空层", color: "bg-[#ffaaff]", hidden: true },
  { name: "3D外壳" },
  { name: "53 边框层", color: "bg-[#5eee99]" },
  { name: "54 顶层", color: "bg-[#fdd0fd]" },
  { name: "55 底层", color: "bg-[#0060d4]" },
];

function LayerRow({ layer }: { layer: Layer }) {
  return (
    <li className={`flex h-8 items-center pr-[21px] ${layer.active ? "bg-[#fbe9d7]" : ""}`}>
      {layer.color ? (
        <span className={`mr-2.5 flex h-8 w-[47px] items-center justify-center ${layer.color}`}>
          {layer.active && (
            <svg viewBox="0 0 22 22" className="size-[22px]">
              <path d="M2 20l2-7L15 2l5 5L9 18z" fill="#ffa01e" />
              <path d="M15 2l2-1.500h2L21.500 3v2L20 7z" fill="#f08a8a" />
              <path d="M2 20l2-7 5 5z" fill="#fbe0b0" />
              <path d="M2 20l.7-2.300L4.300 19.300z" fill="#333" />
            </svg>
          )}
        </span>
      ) : (
        <span className="flex w-[34px] pl-2">
          {!layer.all && (
            <svg viewBox="0 0 10 10" className="size-2.5 fill-[#c4c4c4]">
              <path d="M10 0v10H0z" />
            </svg>
          )}
        </span>
      )}
      <button aria-label={`显示${layer.name}`} className="text-[#1c1c1c]">
        {layer.hidden ? <EyeOff /> : <Eye />}
      </button>
      <span className="ml-2.5 whitespace-nowrap">{layer.name}</span>
      <button aria-label={`锁定${layer.name}`} className="ml-auto pt-1.5">
        {layer.locked ? <Locked /> : <Unlocked />}
      </button>
    </li>
  );
}

function LayerPanel() {
  return (
    <section className="flex min-w-0 flex-1 flex-col bg-white text-base text-[#444]">
      <div className="mt-[11px] flex h-[29px] items-center pr-2.5 pl-3.5">
        <Pick label="图层配置" value="常用(默认)" className="h-full w-[180px]" />
        <button className="ml-[7px] h-full w-[61px] border border-[#d4d4d4] font-medium text-[#2b90e0]">
          重置
        </button>
        <button aria-label="图层管理" className="ml-auto">
          <Ico>
            <path d="M5 2h15l3 6H6zM5 2L1 6l4 3M1 10l4 3h4M1 14l4 3h4M1 18l4 4h4" strokeWidth={1.7} />
            <circle cx="17.500" cy="16.500" r="5" />
            <circle cx="17.500" cy="16.500" r="1.800" />
          </Ico>
        </button>
      </div>
      <div className="flex h-[35px] items-center pl-[23px]">
        <button className="font-medium text-[#2a7de1]">所有层</button>
        <span className="mx-4 h-5 w-px bg-[#d8d8d8]" />
        <button>铜箔层</button>
        <span className="mx-4 h-5 w-px bg-[#d8d8d8]" />
        <button>非铜层</button>
      </div>
      <ul>
        {layers.map((l) => (
          <LayerRow key={l.name} layer={l} />
        ))}
      </ul>
    </section>
  );
}

function RightRail() {
  return (
    <aside className="flex w-[38px] shrink-0 flex-col bg-[#efefef] text-base text-[#444]">
      <div className="flex h-[43px] items-center justify-center border-l border-[#cfcfcf] pb-1">
        <Pin />
      </div>
      {["图层", "过滤", "属性"].map((t) => (
        <button
          key={t}
          className={`flex h-[96px] w-8 items-center justify-center border-t border-r border-[#cfcfcf] leading-[17px] ${
            t === "图层" ? "bg-white font-medium text-[#2b90e0]" : "border-l"
          }`}
        >
          <span className="w-4 break-all">{t}</span>
        </button>
      ))}
      <div className="flex-1 border-l border-[#dadada]" />
    </aside>
  );
}

const readout = [
  ["S", "2654%", "G", "1, 1mil"],
  ["X", "1266mil", "dX", "-43.598mil"],
  ["Y", "738mil", "dY", "121.592mil"],
];

function Readout() {
  return (
    <table className="w-full table-fixed bg-[#ebebeb] text-base text-[#444]">
      <tbody>
        {readout.map(([a, b, c, d]) => (
          <tr key={a} className="h-8 border-t border-[#cfcfcf]">
            <th className="w-[37px] text-right font-normal">{a}</th>
            <td className="w-[136px] pl-3.5">{b}</td>
            <th className="w-[45px] text-right font-normal">{c}</th>
            <td className="pl-3.5">{d}</td>
          </tr>
        ))}
      </tbody>
    </table>
  );
}

// ---------- bottom ----------

function BottomBar() {
  return (
    <footer className="shrink-0">
      <div className="flex h-2 items-center justify-center bg-[#cccccc]">
        <div className="flex h-1.5 w-[68px] items-center justify-center border border-[#8c8c8c]">
          <svg viewBox="0 0 8 4" className="h-1 w-2 fill-[#555]">
            <path d="M0 4h8L4 0z" />
          </svg>
        </div>
      </div>
      <div className="flex h-[42px] items-start border-t border-white bg-[#efefef] text-base text-[#444]">
        <div className="flex h-[33px] w-[45px] items-center justify-center pl-1.5">
          <Pin />
        </div>
        <button className="h-[33px] w-[95px] border border-[#cfcfcf] bg-white font-medium text-[#2a7de1]">
          库
        </button>
        <button className="flex h-[33px] w-[95px] items-center border-y border-r border-[#cfcfcf] pl-3">
          <span className="size-4 rounded-full bg-[#fb1a08]" />
          日志
        </button>
        <button className="h-[33px] w-[95px] border-y border-r border-[#cfcfcf]">DRC</button>
        <button className="h-[33px] w-[113px] border-y border-r border-[#cfcfcf]">查找结果</button>
      </div>
      <div className="flex h-[3px] bg-[#333]">
        <div className="ml-[65px] w-96 bg-[#efefef]" />
        <div className="ml-[284px] w-[213px] bg-[#6b6b6b]" />
      </div>
    </footer>
  );
}

// ---------- video overlays ----------

function Subtitle() {
  return (
    <div className="absolute bottom-[26px] left-[983px] h-[97px] rounded bg-black/40 px-3 pt-1 text-[63px] leading-[97px] whitespace-nowrap text-white">
      这样就是一个耦合的
      <span className="absolute top-2 right-1 text-[11px] leading-[14px] text-[#777]">AI</span>
    </div>
  );
}

function Watermark() {
  return (
    <div className="pointer-events-none absolute top-[50px] left-[70px] flex items-end gap-9 whitespace-nowrap text-white/70">
      <span className="text-[45px] leading-[60px] font-medium">立创EDA</span>
      <svg viewBox="0 0 184 78" className="h-[78px] w-[184px]" fill="none" stroke="white" opacity="0.65">
        <g strokeWidth="8" strokeLinecap="round">
          <path d="M6 4l8 66M108 4l8 66" />
          <path d="M14 46c16-6 34 2 34 12S28 74 15 71zM116 46c16-6 34 2 34 12s-20 16-33 13z" />
          <path d="M58 30l3 38M72 8l4 60M87 34l2 34M158 30l3 38M168 8l4 60M180 34l1 34" strokeWidth="6" />
          <path d="M56 14v6M86 16v6M156 14v6M179 16v6" strokeWidth="5" />
        </g>
      </svg>
    </div>
  );
}

function PlayerLogo() {
  return (
    <svg viewBox="0 0 90 86" className="absolute right-[53px] bottom-[164px] h-[86px] w-[90px] drop-shadow-[0_1px_2px_rgba(0,0,0,0.45)]">
      <path d="M27 6l9 12M63 6l-9 12" stroke="white" strokeWidth="8" strokeLinecap="round" />
      <rect x="5" y="14" width="80" height="66" rx="18" fill="rgba(255,255,255,0.9)" />
      <path d="M35 32q-2 0-2 3v24q0 4 4 3l22-13q3-2 0-4L37 32z" fill="#fafafa" stroke="#bbb" strokeWidth="1.500" />
    </svg>
  );
}

export default function App() {
  return (
    <div className="relative flex h-screen flex-col overflow-hidden border-l border-black bg-white font-['Liberation_Sans','Noto_Sans_CJK_SC',sans-serif]">
      <BrowserTabs />
      <AddressBar />
      <MenuBar />
      <Toolbar />
      <main className="flex min-h-0 flex-1">
        <LeftRail />
        <LeftPanel />
        <Splitter side="left" />
        <Editor />
        <Splitter side="right" />
        <div className="flex w-[382px] shrink-0 flex-col">
          <div className="flex min-h-0 flex-1">
            <LayerPanel />
            <RightRail />
          </div>
          <Readout />
        </div>
      </main>
      <BottomBar />
      <Watermark />
      <PlayerLogo />
      <Subtitle />
    </div>
  );
}
